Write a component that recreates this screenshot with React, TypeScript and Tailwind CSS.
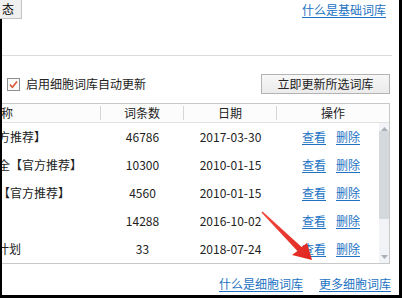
import React from "react";

const rows = [
  { name: "官方推荐】", off: "-ml-4", count: "46786", date: "2017-03-30" },
  { name: "大全【官方推荐】", off: "-ml-4", count: "10300", date: "2010-01-15" },
  { name: "【官方推荐】", off: "-ml-1", count: "4560", date: "2010-01-15" },
  { name: "", off: "", count: "14288", date: "2016-10-02" },
  { name: "计划", off: "-ml-[5px]", count: "33", date: "2018-07-24" },
];

function Link({ children }: { children: React.ReactNode }) {
  return <span className="text-[#2272c3] underline underline-offset-[2px] decoration-[#2272c3] cursor-pointer">{children}</span>;
}

export default function App() {
  return (
    <div className="relative w-[402px] h-[298px] bg-white flex flex-col border-r-[3px] border-b-[3px] border-black font-[family-name:'Noto_Sans_CJK_SC','Microsoft_YaHei',sans-serif] text-[12px] leading-[16px] text-[#222] overflow-hidden">
      {/* top row */}
      <div className="h-[19px] flex items-start justify-between">
        <div className="h-[19px] w-[22px] bg-[#f0f0f0] border-r border-b border-[#c4c4c4] flex items-center pl-[2px] text-black">态</div>
        <div className="mt-[2px] mr-[13px]"><Link>什么是基础词库</Link></div>
      </div>

      {/* main */}
      <div className="flex-1 flex flex-col border-l-2 border-black">
        <div className="mt-[36px] mr-[7px] h-px bg-[#dcdcdc]" />

        <div className="mt-[18px] h-[20px] flex items-center justify-between mr-[9px]">
          <div className="flex items-center ml-[5px] gap-[6px]">
            <svg width="13" height="13" viewBox="0 0 13 13">
              <rect x="0.5" y="0.5" width="12" height="12" fill="#fbfbfb" stroke="#8e8e8e" />
              <path d="M3 6.6 L5.4 9.2 L10 3.6" fill="none" stroke="#d95a35" strokeWidth="1.6" />
            </svg>
            <span className="text-[#222]">启用细胞词库自动更新</span>
          </div>
          <div className="w-[129px] h-[20px] border border-[#b3b3b3] bg-gradient-to-b from-[#f7f7f7] to-[#ebebeb] flex items-center justify-center text-[#222]">
            立即更新所选词库
          </div>
        </div>

        {/* table */}
        <div className="mt-[9px] mr-[9px] border-t border-r border-b border-[#c8c8c8] flex flex-col">
          <div className="h-[19px] flex items-center bg-[#fcfcfc] border-b border-[#e2e2e2]">
            <div className="w-[98px] overflow-hidden whitespace-nowrap"><span className="-ml-[13px] inline-block">名称</span></div>
            <div className="w-px h-[14px] bg-[#d6d6d6]" />
            <div className="w-[82px] text-center">词条数</div>
            <div className="w-px h-[14px] bg-[#d6d6d6]" />
            <div className="w-[92px] text-center">日期</div>
            <div className="w-px h-[14px] bg-[#d6d6d6]" />
            <div className="flex-1 text-center">操作</div>
          </div>
          <div className="flex">
            <div className="flex-1 flex flex-col">
              {rows.map((r, i) => (
                <div key={i} className="h-[28px] flex items-center">
                  <div className="w-[99px] overflow-hidden whitespace-nowrap text-[#222]">
                    <span className={`inline-block ${r.off}`}>{r.name}</span>
                  </div>
                  <div className="w-[83px] text-center">{r.count}</div>
                  <div className="w-[93px] text-center">{r.date}</div>
                  <div className="flex-1 flex pl-[25px] gap-[10px]">
                    <Link>查看</Link>
                    <Link>删除</Link>
                  </div>
                </div>
              ))}
            </div>
            <div className="w-[10px] flex flex-col bg-[#f1f3f6]">
              <div className="h-[8px] flex items-end justify-center">
                <svg width="7" height="4" viewBox="0 0 7 4"><path d="M0 4 L3.5 0 L7 4 Z" fill="#a9b0b8" /></svg>
              </div>
              <div className="h-[88px] bg-[#d4d9de]" />
              <div className="flex-1" />
              <div className="h-[8px] flex items-start justify-center">
                <svg width="7" height="4" viewBox="0 0 7 4"><path d="M0 0 L3.5 4 L7 0 Z" fill="#a9b0b8" /></svg>
              </div>
            </div>
          </div>
        </div>

        <div className="mt-[12px] mr-[8px] flex justify-end gap-[16px]">
          <Link>什么是细胞词库</Link>
          <Link>更多细胞词库</Link>
        </div>
      </div>

      <svg className="absolute left-0 top-0 pointer-events-none" width="402" height="298" viewBox="0 0 402 298">
        <defs>
          <linearGradient id="ar" x1="0" y1="0" x2="1" y2="1">
            <stop offset="0" stopColor="#f04a40" />
            <stop offset="1" stopColor="#e0261f" />
          </linearGradient>
        </defs>
        <polygon
          points="262.6,211.4 301.6,246.9 307,243 312,260 292,255 297.4,251.1 261.4,212.6"
          fill="url(#ar)"
        />
      </svg>
    </div>
  );
}
